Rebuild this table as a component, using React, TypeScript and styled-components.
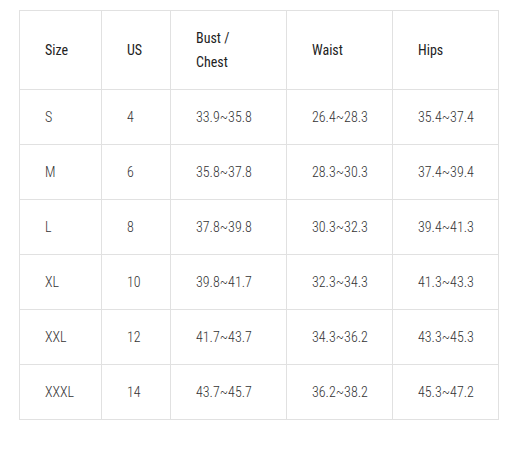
import React from "react";
import styled, { createGlobalStyle } from "styled-components";

const Global = createGlobalStyle`
  html, body { margin: 0; padding: 0; background: #fff; }
  body { font-family: "Liberation Sans Narrow", "Roboto Condensed", "Arial Narrow", sans-serif; }
`;

const Page = styled.div`
  padding: 10px 0 0 19px;
`;

const Table = styled.table`
  border-collapse: collapse;
  table-layout: fixed;
  width: 480px;
  border: 1px solid #e1e1e1;
`;

const HeadCell = styled.th`
  border: 1px solid #e1e1e1;
  padding: 15px 25px 15px 25px;
  text-align: left;
  font-size: 14px;
  line-height: 24px;
  font-weight: 400;
  color: #222;
  vertical-align: middle;
`;

const Cell = styled.td`
  border: 1px solid #e1e1e1;
  padding: 15px 25px 15px 25px;
  font-size: 14px;
  line-height: 24px;
  font-weight: 300;
  color: #333;
  vertical-align: middle;
`;

const headers = ["Size", "US", "Bust / Chest", "Waist", "Hips"];
const widths = [82, 69, 116, 106, 106];
const rows = [
  ["S", "4", "33.9~35.8", "26.4~28.3", "35.4~37.4"],
  ["M", "6", "35.8~37.8", "28.3~30.3", "37.4~39.4"],
  ["L", "8", "37.8~39.8", "30.3~32.3", "39.4~41.3"],
  ["XL", "10", "39.8~41.7", "32.3~34.3", "41.3~43.3"],
  ["XXL", "12", "41.7~43.7", "34.3~36.2", "43.3~45.3"],
  ["XXXL", "14", "43.7~45.7", "36.2~38.2", "45.3~47.2"],
];

export default function App() {
  return (
    <Page>
      <Global />
      <Table>
        <colgroup>
          {widths.map((w, i) => (
            <col key={i} style={{ width: w }} />
          ))}
        </colgroup>
        <thead>
          <tr>
            {headers.map((h) => (
              <HeadCell key={h}>{h}</HeadCell>
            ))}
          </tr>
        </thead>
        <tbody>
          {rows.map((r) => (
            <tr key={r[0]}>
              {r.map((c, i) => (
                <Cell key={i}>{c}</Cell>
              ))}
            </tr>
          ))}
        </tbody>
      </Table>
    </Page>
  );
}
